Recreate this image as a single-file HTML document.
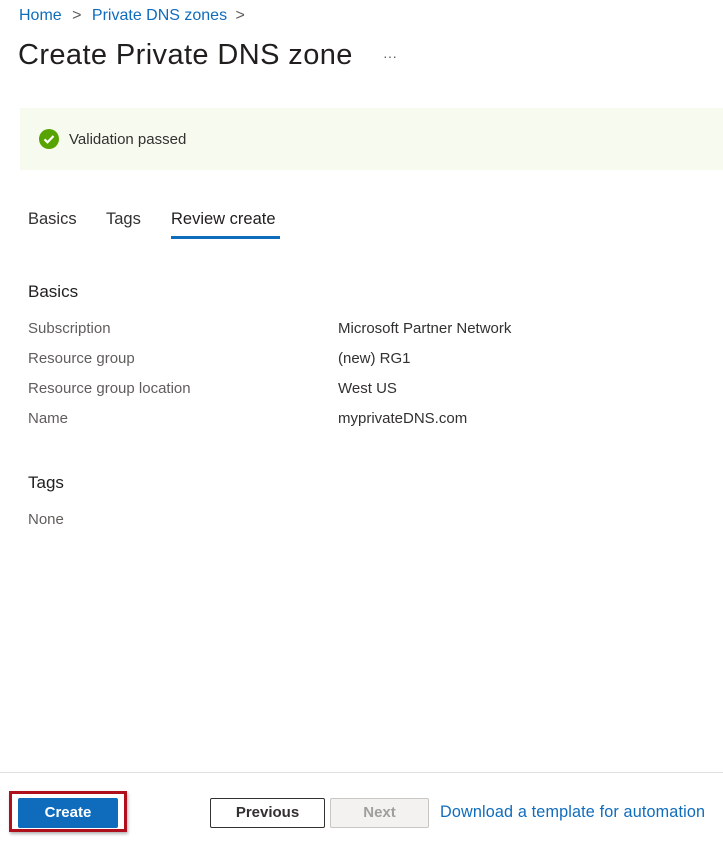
<!DOCTYPE html>
<html><head><meta charset="utf-8"><style>
*{margin:0;padding:0;box-sizing:border-box}
body{width:723px;height:852px;background:#fff;font-family:"Liberation Sans",sans-serif;position:relative;overflow:hidden;color:#323130}
.a{position:absolute;white-space:nowrap}
.lbl{color:#605e5c;font-size:15px}
.val{color:#323130;font-size:15px}
</style></head><body>
<div class="a" style="left:19px;top:7px;font-size:16px;color:#0f6cbd">Home <span style="color:#605e5c;margin:0 6px">&gt;</span> Private DNS zones <span style="color:#605e5c;margin-left:4px">&gt;</span></div>
<div class="a" style="left:18px;top:39px;font-size:29px;color:#201f1e;letter-spacing:0.4px">Create Private DNS zone</div>
<div class="a" style="left:383px;top:48px;font-size:14px;color:#605e5c">···</div>
<div class="a" style="left:20px;top:108px;width:703px;height:62px;background:#f7fbef"></div>
<svg class="a" style="left:38px;top:128px" width="22" height="22" viewBox="0 0 22 22"><circle cx="11" cy="11" r="10" fill="#57a300"/><path d="M6.5 11.3l3 3 6-6.3" stroke="#fff" stroke-width="2.2" fill="none"/></svg>
<div class="a" style="left:69px;top:131px;font-size:15px;color:#323130">Validation passed</div>
<div class="a" style="left:28px;top:210px;font-size:16.5px;color:#323130">Basics</div>
<div class="a" style="left:106px;top:210px;font-size:16.5px;color:#323130">Tags</div>
<div class="a" style="left:171px;top:210px;font-size:16.5px;color:#201f1e">Review create</div>
<div class="a" style="left:171px;top:236px;width:109px;height:3px;background:#0f6cbd"></div>
<div class="a" style="left:28px;top:282px;font-size:17px;color:#201f1e">Basics</div>
<div class="a lbl" style="left:28px;top:320px">Subscription</div>
<div class="a lbl" style="left:28px;top:350px">Resource group</div>
<div class="a lbl" style="left:28px;top:380px">Resource group location</div>
<div class="a lbl" style="left:28px;top:410px">Name</div>
<div class="a val" style="left:338px;top:320px">Microsoft Partner Network</div>
<div class="a val" style="left:338px;top:350px">(new) RG1</div>
<div class="a val" style="left:338px;top:380px">West US</div>
<div class="a val" style="left:338px;top:410px">myprivateDNS.com</div>
<div class="a" style="left:28px;top:473px;font-size:17px;color:#201f1e">Tags</div>
<div class="a lbl" style="left:28px;top:511px">None</div>
<div class="a" style="left:0;top:772px;width:723px;height:1px;background:#e1dfdd"></div>
<div class="a" style="left:9px;top:791px;width:118px;height:41px;border:3px solid #b0101c;box-shadow:1px 2px 3px rgba(0,0,0,.3)"></div>
<div class="a" style="left:18px;top:798px;width:100px;height:30px;background:#0f6cbd;border-radius:2px;color:#fff;font-size:15px;font-weight:bold;text-align:center;line-height:30px">Create</div>
<div class="a" style="left:210px;top:798px;width:115px;height:30px;border:1px solid #323130;border-radius:2px;font-size:15px;font-weight:bold;text-align:center;line-height:28px;color:#323130">Previous</div>
<div class="a" style="left:330px;top:798px;width:99px;height:30px;border:1px solid #c8c6c4;background:#f3f2f1;border-radius:2px;font-size:15px;font-weight:bold;text-align:center;line-height:28px;color:#a19f9d">Next</div>
<div class="a" style="left:440px;top:803px;font-size:16.2px;letter-spacing:0.15px;color:#0f6cbd">Download a template for automation</div>
</body></html>
